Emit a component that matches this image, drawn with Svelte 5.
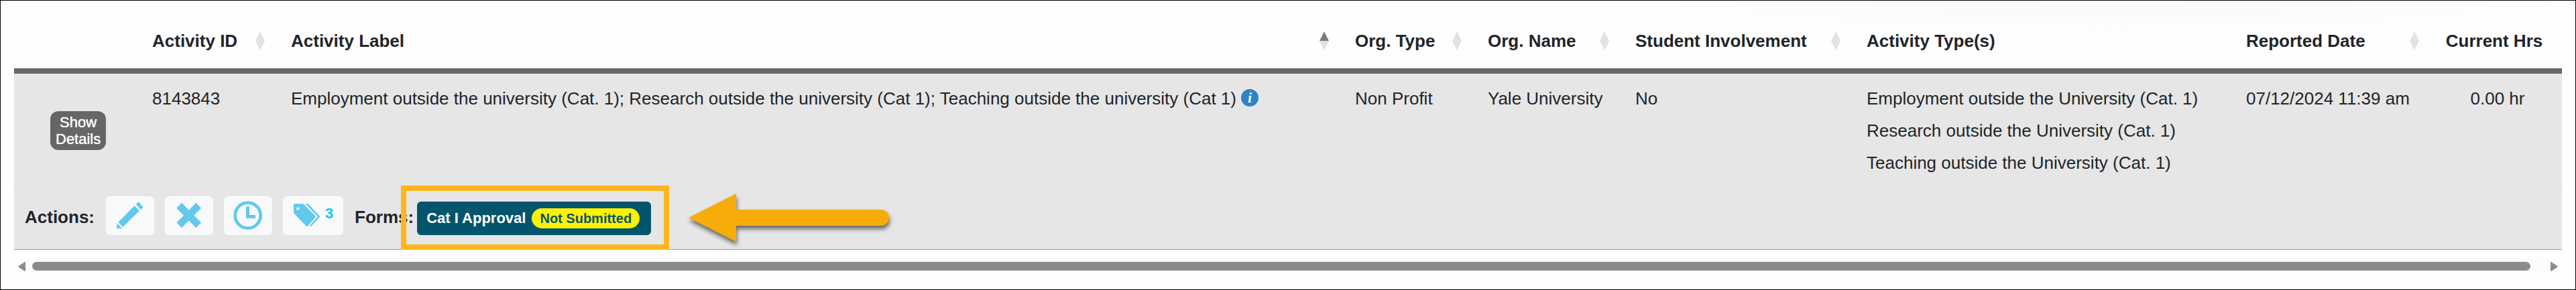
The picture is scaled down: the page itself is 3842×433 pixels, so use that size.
<script>
  let sortKey = $state('label');

  const columns = [
    { key: 'id', title: 'Activity ID', width: 207, sortable: true },
    { key: 'label', title: 'Activity Label', sortable: true },
    { key: 'orgType', title: 'Org. Type', width: 198, sortable: true },
    { key: 'orgName', title: 'Org. Name', width: 220, sortable: true },
    { key: 'student', title: 'Student Involvement', width: 345, sortable: true },
    { key: 'types', title: 'Activity Type(s)', width: 566 },
    { key: 'date', title: 'Reported Date', width: 297, sortable: true },
    { key: 'hours', title: 'Current Hrs', width: 200 },
  ];

  const activities = [
    {
      id: '8143843',
      label: 'Employment outside the university (Cat. 1); Research outside the university (Cat 1); Teaching outside the university (Cat 1)',
      orgType: 'Non Profit',
      orgName: 'Yale University',
      student: 'No',
      types: [
        'Employment outside the University (Cat. 1)',
        'Research outside the University (Cat. 1)',
        'Teaching outside the University (Cat. 1)',
      ],
      date: '07/12/2024 11:39 am',
      hours: '0.00 hr',
      tags: 3,
      form: { name: 'Cat I Approval', status: 'Not Submitted' },
    },
  ];
</script>

<div class="frame">
  <table>
    <colgroup>
      <col style="width: 180px" />
      {#each columns as col}
        <col style={col.width ? `width: ${col.width}px` : ''} />
      {/each}
    </colgroup>
    <thead>
      <tr>
        <td></td>
        {#each columns as col}
          <th scope="col" class={col.key}>
            {#if col.sortable}
              <button class="sort" onclick={() => (sortKey = col.key)}>
                {col.title}
                <svg class:active={sortKey === col.key} width="14" height="28" viewBox="0 0 14 28" aria-hidden="true">
                  <path class="up" d="M7 0l7 14H0z" />
                  <path d="M0 14h14l-7 14z" />
                </svg>
              </button>
            {:else}
              {col.title}
            {/if}
          </th>
        {/each}
      </tr>
    </thead>
    <tbody>
      {#each activities as row}
        <tr class="data">
          <td class="toggle"><button class="details">Show<br />Details</button></td>
          <td>{row.id}</td>
          <td>
            <div class="label">
              {row.label}
              <button class="info" aria-label="More information">i</button>
            </div>
          </td>
          <td>{row.orgType}</td>
          <td>{row.orgName}</td>
          <td>{row.student}</td>
          <td>
            {#each row.types as type}
              <div>{type}</div>
            {/each}
          </td>
          <td>{row.date}</td>
          <td class="hours">{row.hours}</td>
        </tr>
        <tr class="tools">
          <td colspan="9">
            <div class="toolbar">
              <strong>Actions:</strong>
              <div class="icons">
                <button class="icon" aria-label="Edit">
                  <svg width="72" height="58" viewBox="0 0 216 174">
                    <path d="M128 43l22 22-74 72-21-21zM144 27q3-2 5 0l16 20q2 3 0 5l-9 8-22-23zM51 122l22 22-26 1z" />
                  </svg>
                </button>
                <button class="icon" aria-label="Delete">
                  <svg width="72" height="58" viewBox="0 0 216 174">
                    <path d="M75 29L52 53l32 33-32 32 23 24 32-33 32 33 23-24-32-32 32-33-23-24-32 33z" />
                  </svg>
                </button>
                <button class="icon" aria-label="History">
                  <svg width="72" height="58" viewBox="0 0 216 174">
                    <circle cx="107" cy="86" r="57" fill="none" stroke="#62c8ee" stroke-width="14" />
                    <path d="M99 46h15v38h27v15H99z" />
                  </svg>
                </button>
                <button class="icon" aria-label="Tags">
                  <svg width="63" height="58" viewBox="0 0 189 174">
                    <path fill-rule="evenodd" d="M48 34h43l54 54q2 3 0 6l-34 40q-3 2-6 0L48 76zM61 50v11h12V50z" />
                    <path d="M100 34h12l54 57-39 43q-3 2-7-2l36-41z" />
                  </svg>
                  <span>{row.tags}</span>
                </button>
              </div>
              <div class="forms">
                <strong>Forms:</strong>
                <div class="form-wrap">
                  <button class="form">{row.form.name} <span class="badge">{row.form.status}</span></button>
                  <div class="highlight"></div>
                  <svg class="arrow" width="310" height="90" viewBox="0 0 310 90" aria-hidden="true">
                    <path d="M5 43L76 7v24h216a12 12 0 0 1 0 24H76v24z" />
                  </svg>
                </div>
              </div>
            </div>
          </td>
        </tr>
      {/each}
    </tbody>
  </table>

  <div class="scrollbar">
    <button aria-label="Scroll left">
      <svg width="11" height="14" viewBox="0 0 11 14"><path d="M11 1v12q0 1-1 1L1 8q-1-1 0-2l9-6q1 0 1 1z" /></svg>
    </button>
    <div class="thumb"></div>
    <button aria-label="Scroll right">
      <svg width="11" height="14" viewBox="0 0 11 14"><path d="M0 1v12q0 1 1 1l9-6q1-1 0-2L1 0Q0 0 0 1z" /></svg>
    </button>
  </div>
</div>

<style>
  .frame {
    box-sizing: border-box;
    padding: 0 20px 23px;
    border: 1px solid #000;
    background: radial-gradient(ellipse 18% 50px at 82% 0, #f8f8f8, #fefefe) #fefefe;
    color: #212529;
    font: 26px/48px "Liberation Sans", Arial, sans-serif;
    white-space: nowrap;
  }
  table {
    width: 100%;
    table-layout: fixed;
    border-collapse: separate;
    border-spacing: 0;
  }
  button {
    padding: 0;
    border: none;
    background: none;
    color: inherit;
    font: inherit;
    cursor: pointer;
  }
  svg {
    display: block;
    flex: none;
  }
  th, td {
    padding: 13px 0 12px 26px;
    text-align: left;
    vertical-align: top;
  }
  thead th, thead td {
    padding-top: 36px;
    padding-bottom: 17px;
    border-bottom: 8px solid #666;
  }
  thead th.hours {
    padding: 36px 2px 17px 0;
    text-align: center;
  }

  .sort {
    display: flex;
    justify-content: space-between;
    align-items: center;
    width: 100%;
    padding-right: 13px;
  }
  .sort svg { fill: #e1e3e3; }
  .sort .active .up { fill: #7b7c80; }

  .data td {
    background: #e6e6e6;
    border-bottom: 1px solid #dfdfdf;
  }
  .data .toggle {
    padding: 0 0 0 54px;
    vertical-align: middle;
  }
  .details {
    display: block;
    padding: 4px 8px;
    border-radius: 12px;
    background: #666;
    color: #fff;
    font-size: 22px;
    line-height: 25px;
    text-shadow: 0 0 1px #fff;
  }
  .label {
    display: flex;
    gap: 7px;
  }
  .info {
    width: 26px;
    height: 26px;
    margin-top: 10px;
    border-radius: 50%;
    background: #2f83c5;
    color: #fff;
    font: italic bold 22px/26px "Liberation Serif", serif;
  }
  .data .hours {
    padding-left: 26px;
    padding-right: 18px;
    text-align: center;
  }

  .tools td {
    padding: 13px 16px 21px;
    background: #e6e6e6;
    border-bottom: 1px solid #999;
  }
  .toolbar, .forms {
    display: flex;
    align-items: flex-end;
    gap: 17px;
  }
  .toolbar strong { line-height: 54px; }
  .icons {
    display: flex;
    gap: 16px;
  }
  .icon {
    display: flex;
    min-width: 72px;
    border-radius: 6px;
    background: #f8f9fb;
  }
  .icon:last-child { width: 90px; }
  .icon svg { fill: #62c8ee; }
  .icon span {
    color: #0dcaf0;
    font-size: 22px;
    font-weight: bold;
    line-height: 52px;
  }
  .forms { gap: 5px; }
  .form-wrap {
    position: relative;
  }
  .form {
    display: flex;
    align-items: center;
    gap: 9px;
    height: 50px;
    padding: 0 17px 0 14px;
    border-radius: 6px;
    background: #03556d;
    color: #fff;
    font-size: 22px;
    font-weight: bold;
  }
  .badge {
    padding: 0 12px;
    border-radius: 15px;
    background: #fff200;
    color: #03556d;
    font-size: 20px;
    line-height: 30px;
  }

  /* callout drawn over the row */
  .highlight {
    position: absolute;
    inset: -24px -27px -22px -24px;
    border: 8px solid #ffb61c;
    pointer-events: none;
  }
  .arrow {
    position: absolute;
    left: 400px;
    top: -19px;
    fill: #f8ac0a;
    filter: drop-shadow(1px 5px 3px rgba(0, 0, 0, 0.55));
    pointer-events: none;
  }

  .scrollbar {
    display: flex;
    align-items: center;
    gap: 10px;
    height: 23px;
    margin-top: 13px;
    padding: 0 6px;
    background: #fcfcfc;
  }
  .scrollbar svg { fill: #8b8b8b; }
  .thumb {
    flex: 1;
    height: 13px;
    margin-right: 20px;
    border-radius: 7px;
    background: #8b8b8b;
  }
</style>
